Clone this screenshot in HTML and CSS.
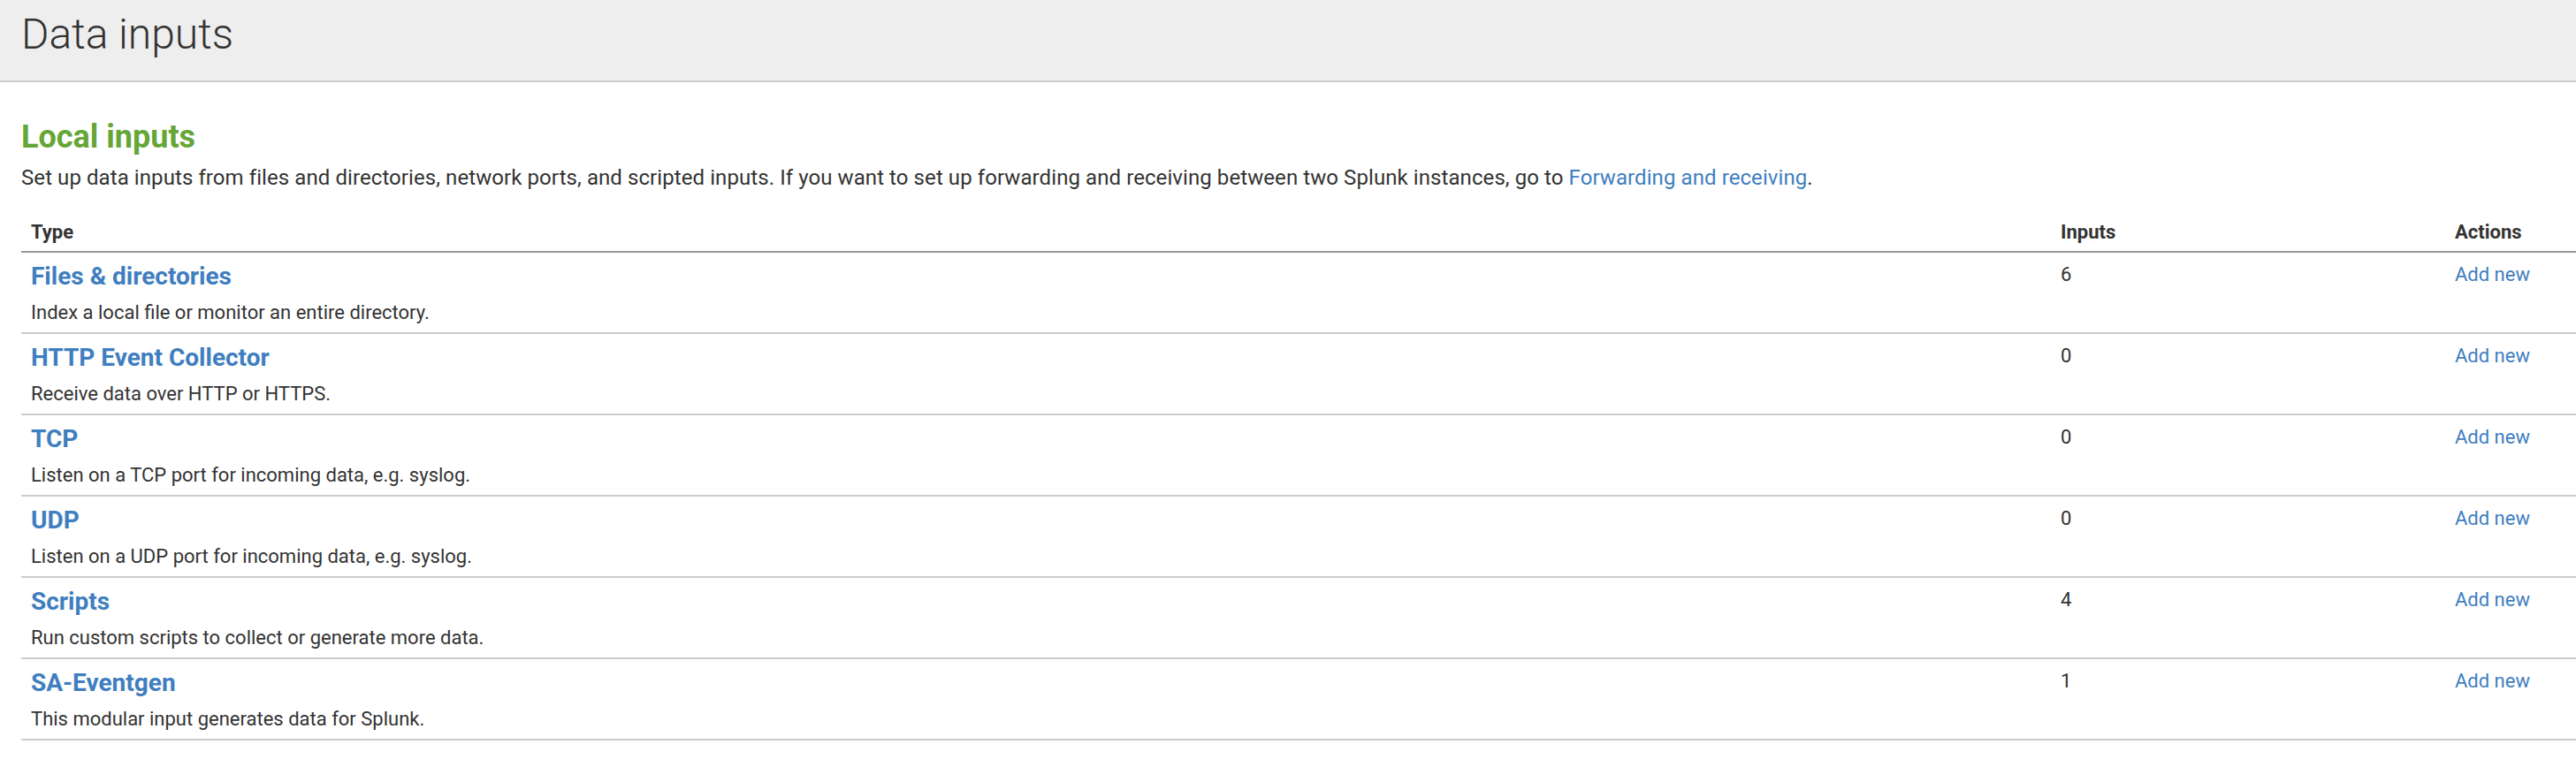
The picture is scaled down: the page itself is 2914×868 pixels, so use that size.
FILE: index.html
```html
<!DOCTYPE html>
<html lang="en">
<head>
<meta charset="utf-8">
<title>Data inputs</title>
<link rel="stylesheet" href="styles.css">
</head>
<body>
<header class="page-header">
  <h1 class="page-title">Data inputs</h1>
</header>
<main class="content">
  <h2 class="section-title">Local inputs</h2>
  <p class="section-desc">Set up data inputs from files and directories, network ports, and scripted inputs. If you want to set up forwarding and receiving between two Splunk instances, go to <a class="link" href="#">Forwarding and receiving</a>.</p>
  <table class="inputs-table">
    <colgroup>
      <col class="col-type">
      <col class="col-inputs">
      <col class="col-actions">
    </colgroup>
    <thead>
      <tr>
        <th>Type</th>
        <th>Inputs</th>
        <th>Actions</th>
      </tr>
    </thead>
    <tbody>
      <tr>
        <td><a class="type-name" href="#">Files &amp; directories</a><div class="type-desc">Index a local file or monitor an entire directory.</div></td>
        <td class="num">6</td>
        <td class="act"><a class="link" href="#">Add new</a></td>
      </tr>
      <tr>
        <td><a class="type-name" href="#">HTTP Event Collector</a><div class="type-desc">Receive data over HTTP or HTTPS.</div></td>
        <td class="num">0</td>
        <td class="act"><a class="link" href="#">Add new</a></td>
      </tr>
      <tr>
        <td><a class="type-name" href="#">TCP</a><div class="type-desc">Listen on a TCP port for incoming data, e.g. syslog.</div></td>
        <td class="num">0</td>
        <td class="act"><a class="link" href="#">Add new</a></td>
      </tr>
      <tr>
        <td><a class="type-name" href="#">UDP</a><div class="type-desc">Listen on a UDP port for incoming data, e.g. syslog.</div></td>
        <td class="num">0</td>
        <td class="act"><a class="link" href="#">Add new</a></td>
      </tr>
      <tr>
        <td><a class="type-name" href="#">Scripts</a><div class="type-desc">Run custom scripts to collect or generate more data.</div></td>
        <td class="num">4</td>
        <td class="act"><a class="link" href="#">Add new</a></td>
      </tr>
      <tr>
        <td><a class="type-name" href="#">SA-Eventgen</a><div class="type-desc">This modular input generates data for Splunk.</div></td>
        <td class="num">1</td>
        <td class="act"><a class="link" href="#">Add new</a></td>
      </tr>
    </tbody>
  </table>
</main>
</body>
</html>
```

FILE: styles.css
```css
* {
  box-sizing: border-box;
}

html, body {
  margin: 0;
  padding: 0;
  background: #ffffff;
}

body {
  font-family: Roboto, "Liberation Sans", Arial, sans-serif;
  color: #333333;
}

.page-header {
  height: 93px;
  background: #eeeeee;
  border-bottom: 2px solid #cccccc;
  padding: 11px 24px 0;
}

.page-title {
  margin: 0;
  font-size: 48px;
  line-height: 56px;
  font-weight: 300;
  color: #333333;
}

.content {
  padding: 0 0 0 24px;
}

.section-title {
  margin: 41px 0 0;
  font-size: 36px;
  line-height: 43px;
  font-weight: 700;
  color: #65a637;
}

.section-desc {
  margin: 10px 0 0;
  font-size: 24px;
  line-height: 28px;
  letter-spacing: 0.08px;
  color: #333333;
}

.link {
  color: #3f7ebf;
  text-decoration: none;
}

.inputs-table {
  width: 100%;
  margin-top: 27px;
  border-collapse: collapse;
  table-layout: fixed;
}

.col-type {
  width: 2296px;
}

.col-inputs {
  width: 446px;
}

.inputs-table th {
  text-align: left;
  font-size: 22px;
  line-height: 26px;
  font-weight: 700;
  color: #333333;
  padding: 8px 11px 8px 11px;
  border-bottom: 2px solid #999999;
}

.inputs-table td {
  vertical-align: top;
  padding: 10px 11px 9px 11px;
  border-bottom: 2px solid #cccccc;
  font-size: 22px;
  line-height: 26px;
}

.type-name {
  display: block;
  font-size: 28px;
  line-height: 34px;
  font-weight: 700;
  color: #3f7ebf;
  text-decoration: none;
}

.type-desc {
  margin-top: 11px;
  font-size: 22px;
  line-height: 26px;
  color: #333333;
}

.inputs-table td.num,
.inputs-table td.act {
  padding-top: 12px;
}
```
